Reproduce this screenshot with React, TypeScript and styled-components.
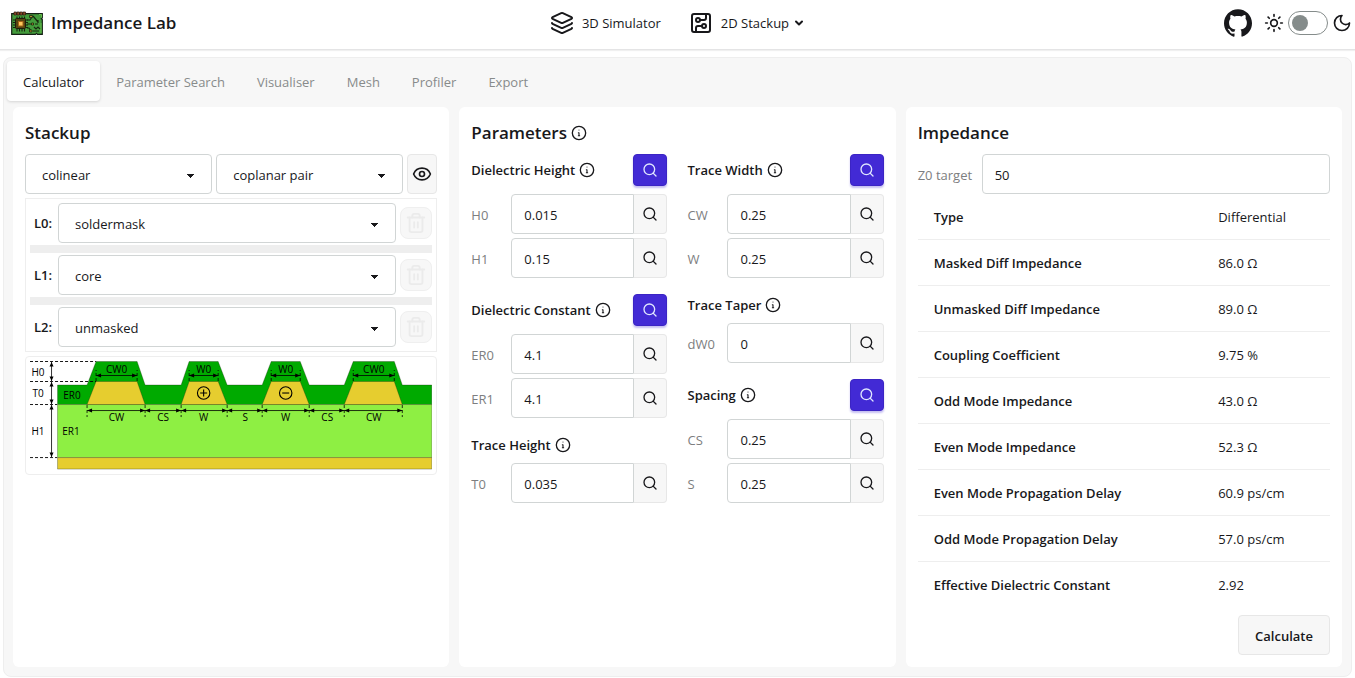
import React from "react";
import styled, { createGlobalStyle, css } from "styled-components";
import { ChevronDown, CircuitBoard, Eye, Layers, Search, Sun, Trash2 } from "lucide-react";
import { SiGithub } from "react-icons/si";

const GlobalStyle = createGlobalStyle`
  *, *::before, *::after { box-sizing: border-box; }
  body {
    margin: 0;
    background: #fff;
    color: #18181b;
    font-family: "Segoe UI", "Open Sans", sans-serif;
    font-size: 13px;
    line-height: 20px;
  }
  button, input, select { font: inherit; color: inherit; margin: 0; }
  svg { display: block; flex-shrink: 0; }
`;

const Page = styled.div`
  min-height: 100vh;
  display: flex;
  flex-direction: column;
`;

const Header = styled.header`
  display: grid;
  grid-template-columns: 1fr auto 1fr;
  align-items: center;
  height: 50px;
  padding: 0 3px 4px 11px;
  border-bottom: 1px solid #e4e4e5;
  box-shadow: 0 1px 1px rgba(0, 0, 0, 0.06);
`;

const Brand = styled.a`
  display: flex;
  align-items: center;
  gap: 8px;
  color: inherit;
  text-decoration: none;
  font-size: 17px;
  font-weight: 600;
`;

const Nav = styled.nav`
  display: flex;
  align-items: center;
  gap: 28px;
  padding-right: 8px;
`;

const NavLink = styled.a`
  display: flex;
  align-items: center;
  gap: 8px;
  color: inherit;
  text-decoration: none;
`;

const NavMenu = styled.button`
  display: flex;
  align-items: center;
  gap: 8px;
  padding: 0;
  border: 0;
  background: none;
`;

const NavMenuLabel = styled.span`
  display: flex;
  align-items: center;
  gap: 4px;
`;

const Tools = styled.div`
  display: flex;
  align-items: center;
  justify-content: flex-end;
  gap: 12px;
`;

const IconLink = styled.a`
  color: inherit;
`;

const ThemeSwitch = styled.label`
  display: flex;
  align-items: center;
  gap: 4px;
`;

const Toggle = styled.input`
  appearance: none;
  display: grid;
  align-items: center;
  width: 40px;
  height: 24px;
  padding: 3px;
  border: 1px solid #858c8b;
  border-radius: 12px;

  &::before {
    content: "";
    width: 16px;
    height: 16px;
    border-radius: 50%;
    background: #858c8b;
  }
  &:checked::before { margin-left: auto; }
`;

const Main = styled.main`
  flex: 1;
  display: flex;
  padding: 7px 3px 1px;
`;

const Workspace = styled.div`
  flex: 1;
  display: flex;
  flex-direction: column;
  min-width: 0;
  padding: 3px;
  border: 1px solid #eeeeee;
  border-radius: 8px;
  background: #f7f7f7;
`;

const TabList = styled.div`
  display: flex;
`;

const Tab = styled.button<{ $active?: boolean }>`
  height: 40px;
  padding: 2px 16px 0;
  border: 0;
  border-radius: 4px;
  background: none;
  color: #888b8b;
  ${(p) => p.$active && css`
    background: #fff;
    color: #18181b;
    box-shadow: 0 1px 3px rgba(0, 0, 0, 0.14);
  `}
`;

const Columns = styled.div`
  flex: 1;
  display: grid;
  grid-template-columns: repeat(3, minmax(0, 1fr));
  gap: 10px;
  padding: 6px;
`;

const Card = styled.section`
  display: flex;
  flex-direction: column;
  padding: 12px;
  border-radius: 6px;
  background: #fff;
`;

const CardTitle = styled.h2`
  display: flex;
  align-items: center;
  gap: 4px;
  margin: 0 0 8px;
  font-size: 17px;
  line-height: 27px;
  font-weight: 600;
`;

const Stack = styled.div`
  display: flex;
  flex-direction: column;
  gap: 4px;
`;

const Row = styled.div`
  display: flex;
  align-items: center;
  gap: 4px;
`;

const fieldBox = css`
  height: 40px;
  min-width: 0;
  border: 1px solid #d1d5d5;
  border-radius: 4px;
  background-color: #fff;
`;

const Select = styled.select`
  ${fieldBox}
  flex: 1;
  appearance: none;
  padding: 1px 28px 0 16px;
  background-image:
    linear-gradient(45deg, transparent 50%, currentColor 50%),
    linear-gradient(135deg, currentColor 50%, transparent 50%);
  background-size: 4px 4px;
  background-repeat: no-repeat;
  background-position: calc(100% - 20px) 19px, calc(100% - 16px) 19px;
`;

const SoftButton = styled.button`
  display: flex;
  align-items: center;
  justify-content: center;
  height: 40px;
  border: 1px solid #e7e7e7;
  border-radius: 4px;
  background: #f7f7f7;
  padding: 0;
`;

const EyeButton = styled(SoftButton)`
  width: 30px;
`;

const LayerBox = styled.div`
  display: flex;
  flex-direction: column;
  gap: 2px;
  padding: 4px;
  border: 1px solid #eeeeee;
`;

const LayerLabel = styled.label`
  width: 24px;
  padding-left: 4px;
  font-weight: 600;
`;

const Divider = styled.div`
  height: 8px;
  background: #eeeeee;
`;

const TrashButton = styled(SoftButton)`
  width: 32px;
  height: 32px;
  border-color: #efefef;
  border-radius: 8px;
  color: #ebebeb;
`;

const DiagramBox = styled.div`
  padding: 4px;
  border: 1px solid #eeeeee;
  border-radius: 4px;
`;

const DiagramSvg = styled.svg`
  width: 100%;
  height: auto;
  font-size: 10px;
  text-anchor: middle;
`;

const ParamColumns = styled.div`
  display: grid;
  grid-template-columns: repeat(2, minmax(0, 1fr));
  gap: 20px;
`;

const ParamColumn = styled.div`
  display: flex;
  flex-direction: column;
  gap: 16px;
`;

const GroupHead = styled.div`
  display: flex;
  align-items: center;
  justify-content: space-between;
  min-height: 21px;
  margin-bottom: 4px;
`;

const GroupTitle = styled.h3`
  display: flex;
  align-items: center;
  gap: 4px;
  margin: 0;
  font-size: 13px;
  font-weight: 600;
`;

const PrimaryButton = styled.button`
  display: flex;
  align-items: center;
  justify-content: center;
  width: 34px;
  height: 32px;
  padding: 0;
  border: 1px solid #3b24c4;
  border-radius: 4px;
  background: #422ad5;
  color: #e0e7ff;
  box-shadow: 0 2px 2px rgba(66, 42, 213, 0.3);
`;

const ParamRow = styled.div`
  display: flex;
  align-items: center;
`;

const ParamLabel = styled.label`
  width: 40px;
  padding-top: 1px;
  color: #7d7e80;
`;

const TextInput = styled.input`
  ${fieldBox}
  flex: 1;
  width: 0;
  padding: 2px 12px 0;
`;

const JoinedInput = styled(TextInput)`
  border-radius: 4px 0 0 4px;
`;

const JoinedButton = styled(SoftButton)`
  width: 33px;
  border-left: 0;
  border-radius: 0 4px 4px 0;
`;

const TargetRow = styled.div`
  display: flex;
  align-items: center;
  gap: 8px;
`;

const TargetLabel = styled.label`
  width: 56px;
  padding-top: 2px;
  white-space: nowrap;
  color: #7d7e80;
`;

const Results = styled.table`
  width: 100%;
  border-collapse: separate;
  border-spacing: 0;

  th, td {
    height: 46px;
    padding: 0 16px;
    text-align: left;
    border-bottom: 1px solid #eeeeee;
  }
  th { width: 69%; font-weight: 600; }
  td { white-space: nowrap; }
  tr:last-child th, tr:last-child td { border-bottom: 0; }
`;

const CalculateButton = styled(SoftButton)`
  align-self: flex-end;
  margin-top: 7px;
  padding: 2px 16px 0;
  font-weight: 600;
`;

const InfoIcon = () => (
  <svg width="16" height="16" viewBox="0 0 24 24" fill="none" stroke="currentColor" strokeWidth="2" strokeLinecap="round" strokeLinejoin="round" aria-hidden="true">
    <circle cx="12" cy="12" r="10" />
    <path d="M11 11.5h1V16M11 16h2M12 7.500h.01" strokeWidth="1.6" />
  </svg>
);

const MoonIcon = () => (
  <svg width="20" height="20" viewBox="0 0 24 24" fill="none" stroke="currentColor" strokeWidth="2" strokeLinecap="round" strokeLinejoin="round" aria-hidden="true">
    <path d="M12 3a6 6 0 0 0 9 9 9 9 0 1 1-9-9Z" />
  </svg>
);

const Logo = () => (
  <svg width="32" height="24" viewBox="0 0 32 24" aria-hidden="true">
    <path d="M.7 2.7h30.6v4.2l-1 .8 1 .8v14.8h-4.8l-1-1-1 1H.7z" fill="#439b3b" stroke="#152015" strokeWidth="1.2" />
    <path d="M28 3.5h2.5v3M30 12v10" stroke="#67bd4c" fill="none" />
    <path d="M3 1h2.5v3H3zM6 1h2.5v3H6zM9 1h2.5v3H9zM12 1h2.5v3H12z" fill="#8b4a24" stroke="#2b1b14" strokeWidth=".7" />
    <path d="M6 5.500v15M8.500 5.500v15M11 5.500v15M13.500 5.500v15M2 9h15M2 11.500h15M2 14h15M2 16.500h15" stroke="#17230f" strokeWidth="1.1" />
    <rect x="4.500" y="7.500" width="10" height="10" rx="1" fill="#55460f" stroke="#201c0c" />
    <rect x="7.500" y="10.500" width="4.500" height="4.500" fill="#ffc95c" stroke="#a7651b" />
    <path d="M16 13h5M16 17h2l2 3M16 9h3l2-3M22 5l5 6M24 13h3M27 9v3" stroke="#17290f" strokeWidth="1.2" fill="none" />
    <path d="M18.500 4.500h3v2h-3zM20.500 12h2v2h-2zM18.500 19h2.500v2h-2.500z" fill="#b98b2d" stroke="#17290f" strokeWidth=".8" />
    <path d="M23 16l2 2 2-2 2 2M22 20h6" stroke="#17290f" fill="none" strokeWidth="1.200" />
  </svg>
);

type Trace = { base: [number, number]; top: [number, number]; label: string; sign?: string };

const traces: Trace[] = [
  { base: [87, 145], top: [96, 137], label: "CW" },
  { base: [181, 227], top: [189, 218], label: "W", sign: "+" },
  { base: [262, 309], top: [271, 300], label: "W", sign: "-" },
  { base: [344, 402], top: [353, 394], label: "CW" },
];

const Arrow = ({ x1, x2, y }: { x1: number; x2: number; y: number }) => (
  <g>
    <path d={`M${x1} ${y}H${x2}`} stroke="#000" strokeWidth=".8" />
    <path d={`M${x1} ${y}l5-2v4zM${x2} ${y}l-5-2v4z`} />
  </g>
);

const VArrow = ({ y1, y2 }: { y1: number; y2: number }) => (
  <g>
    <path d={`M51.5 ${y1}V${y2}`} stroke="#000" strokeWidth=".8" />
    <path d={`M51.5 ${y1}l-2 4.500h4zM51.5 ${y2}l-2-4.500h4z`} />
  </g>
);

const Diagram = () => (
  <DiagramSvg viewBox="30 361 402 109" role="img" aria-label="Cross section of the stackup">
    <g stroke="#1d2a10" strokeOpacity=".45" strokeWidth=".7">
      <path
        d="M57.500 404.500V385H87L96 361.500H137L145 385H181L189 361.500H218L227 385H262L271 361.500H300L309 385H344L353 361.500H394L402 385H431.500V404.500Z"
        fill="#00aa00"
      />
      <path d="M57.500 404.500H431.500V457.500H57.500Z" fill="#8eef43" />
      <path d="M57.500 457.500H431.500V469H57.500Z" fill="#e6cd2f" />
      {traces.map((t) => (
        <path key={t.base[0]} d={`M${t.base[0]} 404.500L${t.top[0]} 381.500H${t.top[1]}L${t.base[1]} 404.500Z`} fill="#e6cd2f" />
      ))}
    </g>
    <path d="M30 361.500H96M30 381.500H96M30 404.500H57M30 457.500H57" stroke="#000" strokeWidth=".9" strokeDasharray="3 2" />
    <VArrow y1={362} y2={381} />
    <VArrow y1={382} y2={404} />
    <VArrow y1={405} y2={457} />
    {traces.map((t) => {
      const mid = (t.top[0] + t.top[1]) / 2;
      return (
        <g key={t.base[0]}>
          <path
            d={`M${t.top[0]} 381V370M${t.top[1]} 381V370M${t.base[0]} 405V417M${t.base[1]} 405V417`}
            stroke="#000"
            strokeWidth=".8"
            strokeDasharray="3 2"
          />
          <Arrow x1={t.top[0]} x2={t.top[1]} y={375.5} />
          <Arrow x1={t.base[0]} x2={t.base[1]} y={410.5} />
          <text x={mid} y="373">{t.label}0</text>
          <text x={mid} y="421">{t.label}</text>
          {t.sign && (
            <g fill="none" stroke="#000" strokeWidth="1.1">
              <circle cx={mid} cy="393" r="6.200" />
              <path d={t.sign === "+" ? `M${mid - 3.5} 393h7M${mid} 389.500v7` : `M${mid - 3.5} 393h7`} />
            </g>
          )}
        </g>
      );
    })}
    <Arrow x1={145} x2={181} y={410.5} />
    <Arrow x1={227} x2={262} y={410.5} />
    <Arrow x1={309} x2={344} y={410.5} />
    <text x="163" y="421">CS</text>
    <text x="245" y="421">S</text>
    <text x="327" y="421">CS</text>
    <text x="38" y="376">H0</text>
    <text x="38" y="397">T0</text>
    <text x="38" y="435">H1</text>
    <text x="72" y="399">ER0</text>
    <text x="71" y="435">ER1</text>
  </DiagramSvg>
);

type Group = { title: string; search: boolean; fields: [string, string][] };

const groupColumns: Group[][] = [
  [
    { title: "Dielectric Height", search: true, fields: [["H0", "0.015"], ["H1", "0.15"]] },
    { title: "Dielectric Constant", search: true, fields: [["ER0", "4.1"], ["ER1", "4.1"]] },
    { title: "Trace Height", search: false, fields: [["T0", "0.035"]] },
  ],
  [
    { title: "Trace Width", search: true, fields: [["CW", "0.25"], ["W", "0.25"]] },
    { title: "Trace Taper", search: false, fields: [["dW0", "0"]] },
    { title: "Spacing", search: true, fields: [["CS", "0.25"], ["S", "0.25"]] },
  ],
];

const results = [
  ["Type", "Differential"],
  ["Masked Diff Impedance", "86.0 Ω"],
  ["Unmasked Diff Impedance", "89.0 Ω"],
  ["Coupling Coefficient", "9.75 %"],
  ["Odd Mode Impedance", "43.0 Ω"],
  ["Even Mode Impedance", "52.3 Ω"],
  ["Even Mode Propagation Delay", "60.9 ps/cm"],
  ["Odd Mode Propagation Delay", "57.0 ps/cm"],
  ["Effective Dielectric Constant", "2.92"],
];

const tabs = ["Calculator", "Parameter Search", "Visualiser", "Mesh", "Profiler", "Export"];
const layers = ["soldermask", "core", "unmasked"];

const ParamGroup = ({ group }: { group: Group }) => (
  <Stack>
    <GroupHead>
      <GroupTitle>
        {group.title} <InfoIcon />
      </GroupTitle>
      {group.search && (
        <PrimaryButton aria-label={`Search ${group.title}`}>
          <Search size={16} />
        </PrimaryButton>
      )}
    </GroupHead>
    {group.fields.map(([name, value]) => (
      <ParamRow key={name}>
        <ParamLabel htmlFor={`param-${name}`}>{name}</ParamLabel>
        <JoinedInput id={`param-${name}`} defaultValue={value} />
        <JoinedButton aria-label={`Search ${name}`}>
          <Search size={16} />
        </JoinedButton>
      </ParamRow>
    ))}
  </Stack>
);

export default function App() {
  return (
    <Page>
      <GlobalStyle />
      <Header>
        <Brand href="#">
          <Logo /> Impedance Lab
        </Brand>
        <Nav>
          <NavLink href="#simulator">
            <Layers size={24} /> 3D Simulator
          </NavLink>
          <NavMenu>
            <CircuitBoard size={24} />
            <NavMenuLabel>
              2D Stackup <ChevronDown size={12} strokeWidth={4} />
            </NavMenuLabel>
          </NavMenu>
        </Nav>
        <Tools>
          <IconLink href="#github" aria-label="GitHub">
            <SiGithub size={28} />
          </IconLink>
          <ThemeSwitch>
            <Sun size={20} />
            <Toggle type="checkbox" aria-label="Dark theme" />
            <MoonIcon />
          </ThemeSwitch>
        </Tools>
      </Header>
      <Main>
        <Workspace>
          <TabList role="tablist">
            {tabs.map((name, i) => (
              <Tab key={name} role="tab" aria-selected={i === 0} $active={i === 0}>
                {name}
              </Tab>
            ))}
          </TabList>
          <Columns>
            <Card>
              <CardTitle>Stackup</CardTitle>
              <Stack>
                <Row>
                  <Select aria-label="Arrangement">
                    <option>colinear</option>
                  </Select>
                  <Select aria-label="Trace type">
                    <option>coplanar pair</option>
                  </Select>
                  <EyeButton aria-label="Show diagram">
                    <Eye size={20} />
                  </EyeButton>
                </Row>
                <LayerBox>
                  {layers.map((layer, i) => (
                    <React.Fragment key={layer}>
                      {i > 0 && <Divider />}
                      <Row>
                        <LayerLabel htmlFor={`layer-${i}`}>L{i}:</LayerLabel>
                        <Select id={`layer-${i}`}>
                          <option>{layer}</option>
                        </Select>
                        <TrashButton disabled aria-label={`Delete layer ${i}`}>
                          <Trash2 size={22} />
                        </TrashButton>
                      </Row>
                    </React.Fragment>
                  ))}
                </LayerBox>
                <DiagramBox>
                  <Diagram />
                </DiagramBox>
              </Stack>
            </Card>
            <Card>
              <CardTitle>
                Parameters <InfoIcon />
              </CardTitle>
              <ParamColumns>
                {groupColumns.map((groups, i) => (
                  <ParamColumn key={i}>
                    {groups.map((group) => (
                      <ParamGroup key={group.title} group={group} />
                    ))}
                  </ParamColumn>
                ))}
              </ParamColumns>
            </Card>
            <Card>
              <CardTitle>Impedance</CardTitle>
              <TargetRow>
                <TargetLabel htmlFor="z0">Z0 target</TargetLabel>
                <TextInput id="z0" defaultValue="50" />
              </TargetRow>
              <Results>
                <tbody>
                  {results.map(([name, value]) => (
                    <tr key={name}>
                      <th scope="row">{name}</th>
                      <td>{value}</td>
                    </tr>
                  ))}
                </tbody>
              </Results>
              <CalculateButton>Calculate</CalculateButton>
            </Card>
          </Columns>
        </Workspace>
      </Main>
    </Page>
  );
}
